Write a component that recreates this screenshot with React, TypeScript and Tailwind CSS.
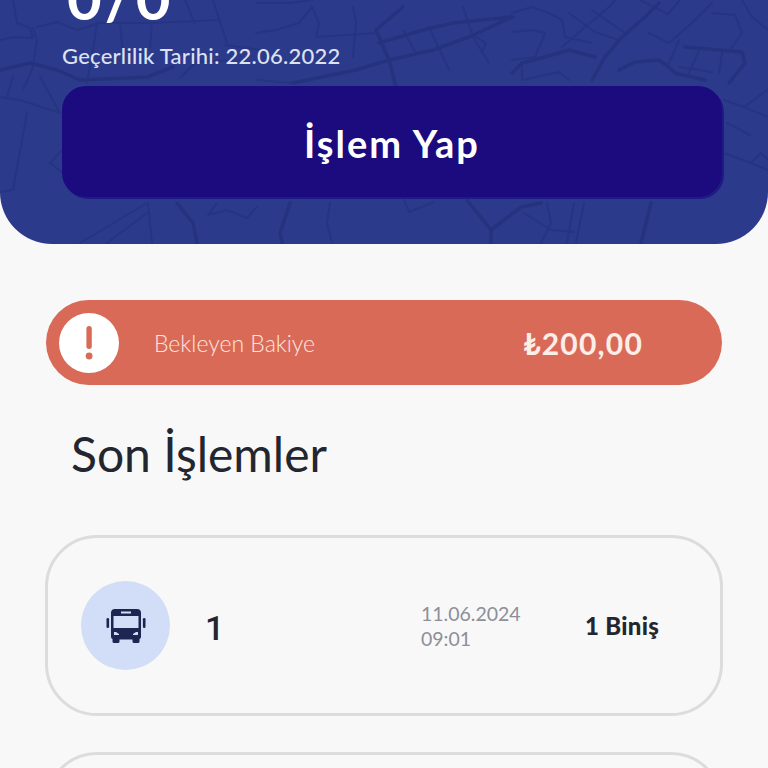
const thinStreets = [
  "M256 3 L290 3 L312 0",
  "M312 7 L319 23 L316 37",
  "M256 33 L276 30 L299 23 L312 7",
  "M316 37 L376 33",
  "M353 7 L356 23 L353 57",
  "M429 27 L449 70",
  "M463 7 L473 37 L489 63",
  "M403 30 L416 53",
  "M476 37 L486 43 L483 50",
  "M256 80 L293 83",
  "M512 32 L532 30 L545 33 L535 57 L512 60",
  "M512 13 L532 7 L549 13 L562 20 L565 37 L592 43",
  "M562 47 L584 28 L609 7 L615 0",
  "M569 13 L595 32 L619 40",
  "M592 10 L625 33",
  "M649 33 L669 43 L692 23 L712 3",
  "M679 40 L669 63",
  "M722 53 L719 73",
  "M699 50 L689 73",
  "M679 67 L712 72",
  "M712 13 L735 15 L742 33 L730 50",
  "M742 0 L752 17 L768 30",
  "M522 63 L522 80 L559 72 L569 80",
  "M13 0 L17 23 L30 28 L33 38 L13 37 L0 40",
  "M33 28 L37 40 L33 67 L23 90",
  "M37 27 L57 22 L77 30 L100 23 L150 23 L217 20",
  "M97 23 L93 50 L87 83",
  "M152 23 L150 47",
  "M213 0 L227 43",
  "M0 97 L20 100 L60 113",
  "M27 113 L13 190 L0 192",
  "M50 163 L62 150",
  "M50 163 L63 173",
  "M40 77 L60 113",
  "M13 77 L7 97",
  "M147 203 L80 243",
  "M147 213 L107 243",
  "M148 203 L152 243",
  "M217 203 L208 215 L227 210 L247 218 L257 207",
  "M330 203 L327 223 L332 243",
  "M404 200 L409 212 L434 202",
  "M524 213 L551 230 L574 232",
  "M547 203 L551 223 L541 243",
  "M574 203 L567 243",
  "M584 203 L576 243",
  "M724 100 L744 107 L767 90",
  "M744 107 L768 117",
  "M724 153 L751 163 L768 170",
  "M751 163 L761 153 L768 160",
  "M727 123 L750 135",
  "M185 0 L195 24",
  "M120 24 L124 62",
  "M180 78 L196 62 L232 60",
  "M225 45 L262 50",
  "M640 0 L668 14 L680 0",
];

const thickStreets = [
  "M659 3 L645 17 L622 37 L605 57 L592 80",
  "M619 70 L635 62 L659 60 L669 67 L675 73 L705 80",
  "M685 47 L742 52 L745 63 L729 83",
  "M512 73 L522 63 L545 57 L569 50 L595 57",
  "M376 30 L389 60 L396 87",
  "M403 7 L376 30",
  "M379 43 L423 30 L453 23 L512 17",
  "M293 83 L356 70 L389 60 L433 50 L469 37 L512 17",
  "M0 70 L30 63 L57 70 L80 80 L147 77 L173 67",
  "M177 203 L193 223 L197 243",
  "M290 203 L280 233 L282 243",
  "M467 200 L491 230 L491 243",
  "M491 230 L521 207 L541 203",
  "M651 203 L641 243",
];

function BusIcon() {
  return (
    <svg viewBox="0 0 40 34" className="w-[40px] h-[34px]" aria-hidden="true">
      <path
        fill="#1d2650"
        fillRule="evenodd"
        d="M9 0 H31 Q35 0 35 4 V28 Q35 29.5 33.5 30 V32.5 Q33.5 34 32 34 H28 Q26.5 34 26.5 32.5 V30.5 H13.5 V32.5 Q13.5 34 12 34 H8 Q6.5 34 6.5 32.5 V30 Q5 29.5 5 28 V4 Q5 0 9 0 Z M7.5 7 V19 H32.5 V7 Z M15 2.5 V4.5 H25 V2.5 Z M8 23 V26 H13 V25 L10 23 Z M32 23 V26 H27 V25 L30 23 Z"
      />
      <rect x="0.5" y="9" width="2.6" height="10" rx="1.2" fill="#1d2650" />
      <rect x="36.9" y="9" width="2.6" height="10" rx="1.2" fill="#1d2650" />
    </svg>
  );
}

export default function App() {
  return (
    <div className="h-[768px] overflow-hidden bg-[#f8f8f8] font-['Lato',sans-serif]">
      <header className="relative h-[244px] overflow-hidden rounded-b-[52px] bg-[#2c3a8b] pl-[62px] pr-[46px] pb-[47px] flex flex-col justify-end">
        <svg viewBox="0 0 768 244" className="absolute inset-0 w-[768px] h-[244px] blur-[0.6px]" aria-hidden="true">
          {thinStreets.map((d) => (
            <path key={d} d={d} fill="none" stroke="#263581" strokeWidth={2} strokeLinejoin="round" strokeLinecap="round" />
          ))}
          {thickStreets.map((d) => (
            <path key={d} d={d} fill="none" stroke="#25337f" strokeWidth={3.5} strokeLinejoin="round" strokeLinecap="round" />
          ))}
        </svg>
        <div className="relative pl-[5px] text-[60px] leading-[60px] font-bold text-white tracking-[3px] shrink-0">0/0</div>
        <div className="relative mt-[15px] text-[22px] leading-[28px] font-medium tracking-[0.25px] text-[#dde1f0] shrink-0">Geçerlilik Tarihi: 22.06.2022</div>
        <button className="relative mt-[16px] h-[111px] pt-[3px] shrink-0 rounded-[24px] bg-[#1b0b7e] text-[38px] font-bold tracking-[2px] text-white shadow-[2px_2px_0_#201a86]">
          İşlem Yap
        </button>
      </header>

      <div className="mt-[56px] ml-[46px] w-[676px] h-[85px] rounded-full bg-[#d96a58] flex items-center pl-[13px]">
        <div className="w-[60px] h-[60px] rounded-full bg-white flex items-center justify-center">
          <svg viewBox="0 0 12 40" className="w-[12px] h-[40px]" aria-hidden="true">
            <rect x="3.4" y="3" width="5.4" height="23" rx="2.7" fill="#d96a58" />
            <circle cx="6.1" cy="33" r="3.4" fill="#d96a58" />
          </svg>
        </div>
        <span className="ml-[35px] pt-[2px] text-[23px] font-light text-[#fde6dc]">Bekleyen Bakiye</span>
        <span className="ml-auto mr-[79px] pt-[2px] text-[30px] font-bold tracking-[1.2px] text-[#fbeee8]">₺200,00</span>
      </div>

      <h2 className="mt-[39px] ml-[71px] text-[48px] leading-[60px] font-normal text-[#23262f]">Son İşlemler</h2>

      <div className="mt-[51px] ml-[45px] w-[678px] h-[181px] rounded-[52px] border-[3px] border-[#dcdcdc] flex items-center pl-[33px]">
        <div className="w-[89px] h-[89px] rounded-full bg-[#d2ddf8] flex items-center justify-center">
          <BusIcon />
        </div>
        <span className="ml-[35px] w-[12px] font-['Roboto',sans-serif] text-[34px] leading-[44px] mt-[4px] font-medium text-[#23262f]">1</span>
        <div className="ml-[204px] w-[110px] text-[19.5px] leading-[25px] font-normal text-[#8c8f96]">
          <div>11.06.2024</div>
          <div>09:01</div>
        </div>
        <span className="ml-[54px] text-[24px] font-black tracking-[0.3px] text-[#23262f]">1 Biniş</span>
      </div>

      <div className="mt-[36px] ml-[45px] w-[678px] h-[181px] rounded-[52px] border-[3px] border-[#dcdcdc]" />
    </div>
  );
}
